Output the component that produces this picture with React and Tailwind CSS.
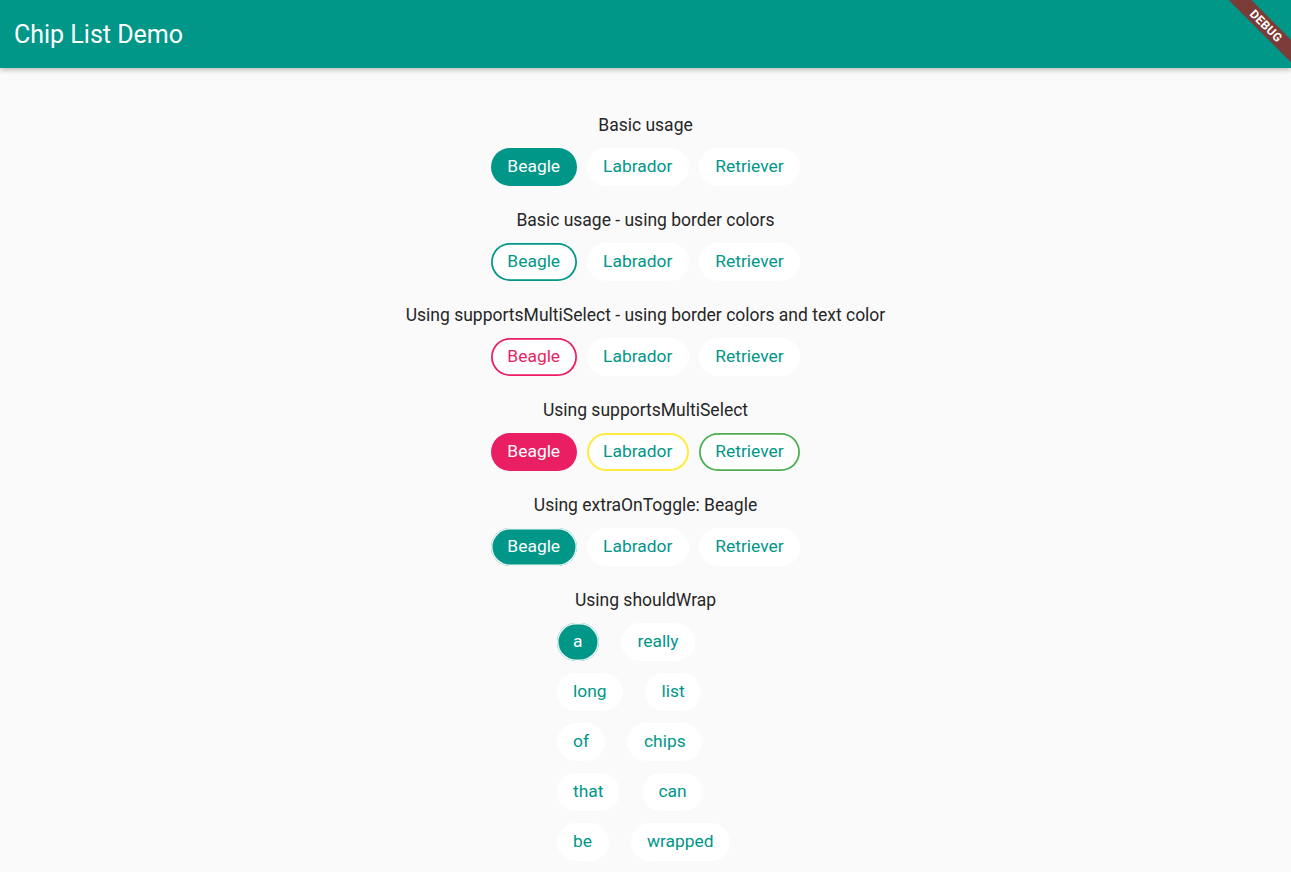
import React from "react";

const font = { fontFamily: "Roboto, 'Noto Sans', Arial, sans-serif" };

function Chip({ label, variant = "plain" }) {
  const base =
    "h-[38px] px-[16.5px] rounded-full flex items-center justify-center text-[17.4px] leading-none whitespace-nowrap";
  const styles = {
    plain: "bg-white text-[#009688]",
    selected: "bg-[#009688] text-white",
    tealBorder: "bg-white text-[#009688] shadow-[inset_0_0_0_1.75px_#009688]",
    pinkBorder: "bg-white text-[#e91e63] shadow-[inset_0_0_0_1.75px_#e91e63]",
    pinkFill: "bg-[#e91e63] text-white",
    yellowBorder: "bg-white text-[#009688] shadow-[inset_0_0_0_2px_#ffeb3b]",
    greenBorder: "bg-white text-[#009688] shadow-[inset_0_0_0_1.75px_#4caf50]",
    toggled: "bg-[#009688] text-white shadow-[inset_0_0_0_1.5px_#eef7f6]",
  };
  return <div className={`${base} ${styles[variant]}`}>{label}</div>;
}

function Section({ title, children }) {
  return (
    <div className="flex flex-col items-center">
      <div className="h-[24px] leading-[24px] text-[17.5px] text-[#262626]">{title}</div>
      <div className="mt-[11px]">{children}</div>
    </div>
  );
}

function Row({ chips }) {
  return (
    <div className="flex gap-[10px]">
      {chips.map(([label, variant]) => (
        <Chip key={label} label={label} variant={variant} />
      ))}
    </div>
  );
}

export default function App() {
  const wrapWords = ["a", "really", "long", "list", "of", "chips", "that", "can", "be", "wrapped"];
  return (
    <div className="min-h-[872px] bg-[#fafafa] relative overflow-hidden" style={font}>
      <header className="h-[68px] bg-[#009688] flex items-center px-[14px] shadow-[0_2px_5px_rgba(0,0,0,0.25)] relative z-10">
        <h1 className="text-white text-[25px] font-normal leading-none">Chip List Demo</h1>
        <div className="absolute top-0 right-0 w-[110px] h-[110px] overflow-hidden pointer-events-none">
          <div className="absolute left-[4.5px] top-[17.5px] w-[160px] h-[16px] bg-[#7b3b36] rotate-45 flex items-center justify-center">
            <span className="text-white text-[12px] font-bold tracking-[0.3px] leading-none">DEBUG</span>
          </div>
        </div>
      </header>

      <main className="pt-[45px] flex flex-col items-center gap-[22px]">
        <Section title="Basic usage">
          <Row chips={[["Beagle", "selected"], ["Labrador", "plain"], ["Retriever", "plain"]]} />
        </Section>
        <Section title="Basic usage - using border colors">
          <Row chips={[["Beagle", "tealBorder"], ["Labrador", "plain"], ["Retriever", "plain"]]} />
        </Section>
        <Section title="Using supportsMultiSelect - using border colors and text color">
          <Row chips={[["Beagle", "pinkBorder"], ["Labrador", "plain"], ["Retriever", "plain"]]} />
        </Section>
        <Section title="Using supportsMultiSelect">
          <Row chips={[["Beagle", "pinkFill"], ["Labrador", "yellowBorder"], ["Retriever", "greenBorder"]]} />
        </Section>
        <Section title="Using extraOnToggle: Beagle">
          <Row chips={[["Beagle", "toggled"], ["Labrador", "plain"], ["Retriever", "plain"]]} />
        </Section>
        <Section title="Using shouldWrap">
          <div className="w-[178px] flex flex-wrap gap-x-[22px] gap-y-[12px]">
            {wrapWords.map((w, i) => (
              <Chip key={w} label={w} variant={i === 0 ? "toggled" : "plain"} />
            ))}
          </div>
        </Section>
      </main>
    </div>
  );
}
